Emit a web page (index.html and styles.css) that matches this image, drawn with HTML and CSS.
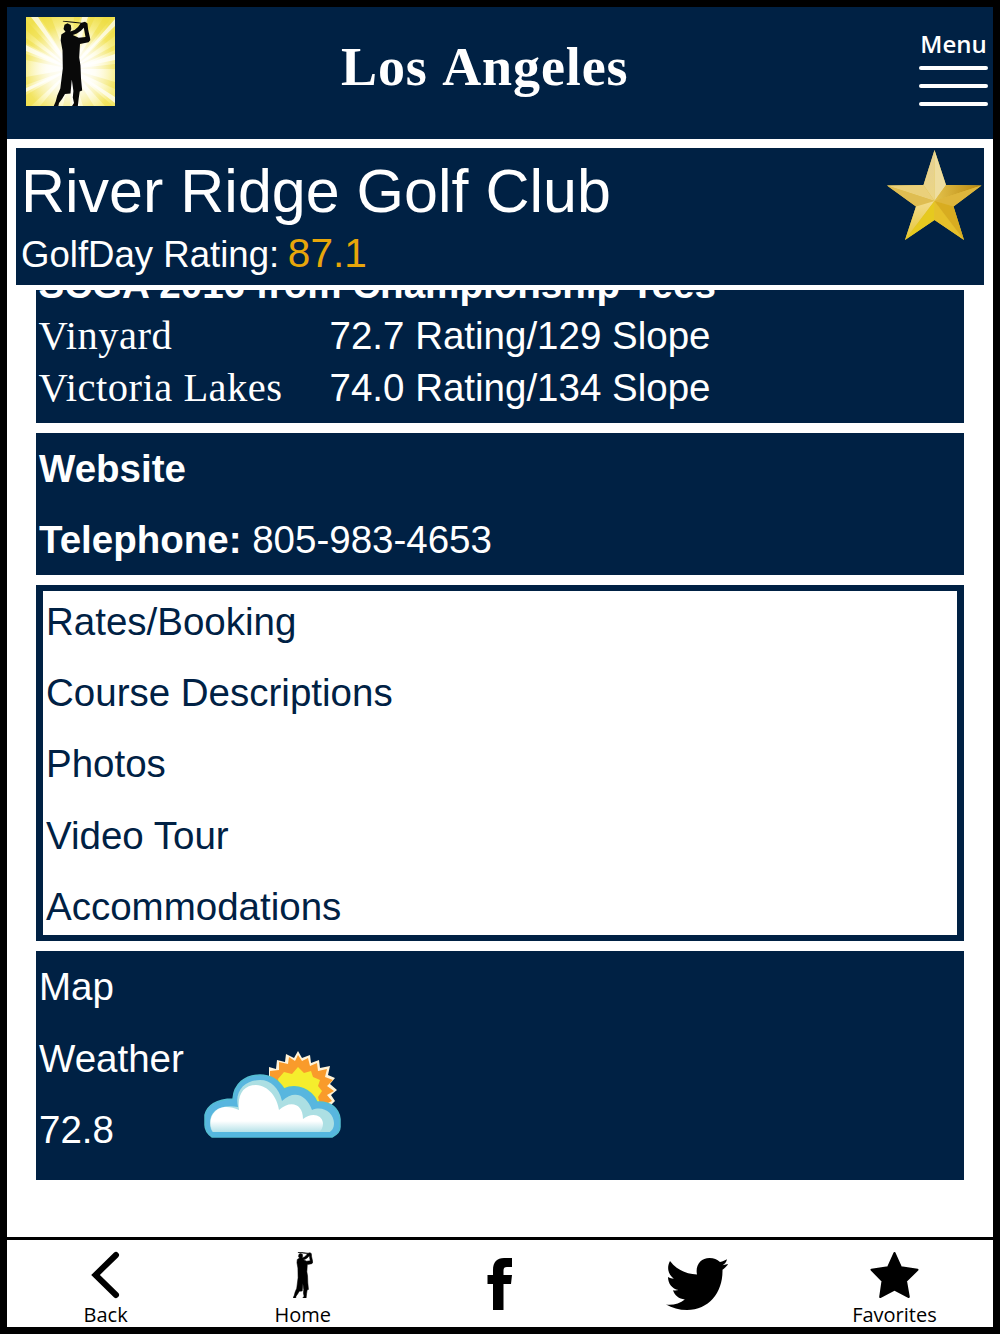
FILE: index.html
```html
<!DOCTYPE html>
<html lang="en">

<head>
  <meta charset="UTF-8">
  <title>River Ridge Golf Club</title>
  <link rel="stylesheet" href="styles.css">
</head>

<body>
  <div class="app">
    <header class="header">
      <svg class="logo" viewBox="0 0 89 89">
        <defs>
          <radialGradient id="glow" cx="50%" cy="60%" r="68%">
            <stop offset="0" stop-color="#fff"/>
            <stop offset=".4" stop-color="#fffde0"/>
            <stop offset=".75" stop-color="#f8ee8a"/>
            <stop offset="1" stop-color="#efe04e"/>
          </radialGradient>
          <radialGradient id="shine" cx="50%" cy="60%" r="52%">
            <stop offset="0" stop-color="#fff"/>
            <stop offset=".45" stop-color="#fff" stop-opacity=".8"/>
            <stop offset="1" stop-color="#fff" stop-opacity="0"/>
          </radialGradient>
          <symbol id="golfer" viewBox="0 0 37 86">
            <path d="M9.5 .2 20 1.2 28 2.2 31.5 1.2 34 3 34.6 9 37 19.5 35 21.8 26.5 23.6 25.7 37 27 45 27.5 58 28.7 70 26.2 71 25.2 78 24.3 86H18.2L20.5 82.5 19.3 77 19.9 70.5 18.3 59 17 73 11.5 73.5 8.5 78.5 5.5 82.5 4.8 86H0L2.2 81 3.8 75 6.8 68 9.3 48 9 30 7.2 20 7.8 14 12 11.2 10 8.4 11 4.2 14 2.8 17.3 4.4 17.8 8.5 16.8 11 21 9.5 24.5 6.4 27 2.9 17 2 9.3 1Z M30.3 7.2 27.4 10.2 23.4 13 19.3 14.6 25.3 17.2 32 16.4Z" fill-rule="evenodd"/>
          </symbol>
        </defs>
        <rect width="89" height="89" fill="url(#glow)"/>
        <g fill="#eedc3d" opacity=".5">
          <path d="M45 52 0 3V13ZM45 52 0 21V26ZM45 52 14 0H25ZM45 52 48 0H54ZM45 52 64 0H69ZM45 52 78 0H86ZM45 52 89 12V19ZM45 52 89 28V33ZM45 52 89 47V52ZM45 52 89 65V72ZM45 52 79 89H87ZM45 52 57 89H68ZM45 52 37 89H44ZM45 52 14 89H28ZM45 52 0 78V89H5ZM45 52 0 60V68ZM45 52 0 37V43Z"/>
        </g>
        <g fill="#fff" opacity=".7">
          <path d="M45 52 0 28V34ZM45 52 5 0H12ZM45 52 56 0H62ZM45 52 89 2V9ZM45 52 89 37V43ZM45 52 89 80V86ZM45 52 46 89H54ZM45 52 0 71V75Z"/>
        </g>
        <rect width="89" height="89" fill="url(#shine)"/>
        <use href="#golfer" x="27.5" y="3.5" width="37" height="86" fill="#090909"/>
      </svg>
      <div class="city">Los Angeles</div>
      <div class="menu">
        <span class="menu-label">Menu</span>
        <span class="menu-bar"></span>
        <span class="menu-bar"></span>
        <span class="menu-bar"></span>
      </div>
    </header>

    <div class="course">
      <div>
        <div class="course-name">River Ridge Golf Club</div>
        <div class="course-rating">GolfDay Rating: <span class="score">87.1</span></div>
      </div>
      <svg class="gold-star" viewBox="0 0 95 92">
        <defs>
          <linearGradient id="goldLight" x1="0" y1="0" x2="0" y2="1">
            <stop offset="0" stop-color="#f3dc8e"/>
            <stop offset="1" stop-color="#e5c634"/>
          </linearGradient>
          <linearGradient id="goldDark" x1="0" y1="0" x2="1" y2="0">
            <stop offset="0" stop-color="#e3c24c"/>
            <stop offset="1" stop-color="#b9860c"/>
          </linearGradient>
          <linearGradient id="goldTop" x1="0" y1="0" x2="0" y2="1">
            <stop offset="0" stop-color="#e3cf95"/>
            <stop offset="1" stop-color="#ecd684"/>
          </linearGradient>
        </defs>
        <path d="M47.5 0 59 35 94.5 35.5 66.5 56.5 77 90 47.5 70 18 90 29 56.5 0 35.5 36.5 35Z" fill="#dfbe3d"/>
        <path d="M47.5 0V51L36.5 35Z" fill="url(#goldTop)"/>
        <path d="M47.5 0V51L59 35Z" fill="#eedd9f"/>
        <path d="M0 35.5 36.5 35 47.5 51Z" fill="#ead07a"/>
        <path d="M0 35.5 29 56.5 47.5 51Z" fill="#dfbd52"/>
        <path d="M94.5 35.5 59 35 47.5 51Z" fill="url(#goldDark)"/>
        <path d="M94.5 35.5 66.5 56.5 47.5 51Z" fill="#deb63c"/>
        <path d="M18 90 29 56.5 47.5 51Z" fill="url(#goldLight)"/>
        <path d="M18 90 47.5 70V51Z" fill="#e6c91f"/>
        <path d="M77 90 47.5 70V51Z" fill="#e6c02a"/>
        <path d="M77 90 66.5 56.5 47.5 51Z" fill="#d8ac20"/>
      </svg>
    </div>

    <main class="content">
      <section class="panel ratings">
        <div class="row heading"><b>SCGA 2016 from Championship Tees</b></div>
        <div class="row"><span class="nine">Vinyard</span><span>72.7 Rating/129 Slope</span></div>
        <div class="row"><span class="nine">Victoria Lakes</span><span>74.0 Rating/134 Slope</span></div>
      </section>

      <section class="panel">
        <div class="line"><b>Website</b></div>
        <div class="line"><b>Telephone:</b> 805-983-4653</div>
      </section>

      <section class="panel links">
        <div class="line">Rates/Booking</div>
        <div class="line">Course Descriptions</div>
        <div class="line">Photos</div>
        <div class="line">Video Tour</div>
        <div class="line">Accommodations</div>
      </section>

      <section class="panel local">
        <div>
          <div class="line">Map</div>
          <div class="line">Weather</div>
          <div class="line">72.8</div>
        </div>
        <svg class="weather" viewBox="0 0 137 88">
          <defs>
            <linearGradient id="cloudBase" x1="0" y1="0" x2="0" y2="1">
              <stop offset=".75" stop-color="#fff"/>
              <stop offset="1" stop-color="#b0dfe6"/>
            </linearGradient>
          </defs>
          <path d="M65 16 72 18 73 9 81 11 82 3 90 7 94 0 98 7 106 4 107 12 115 9 116 17 126 15 124 24 131 27 126 33 133 39 127 44 131 50 127 54 129 62H75L65 27Z" fill="#fff3d8"/>
          <path d="M66 20 75 19 75 11 84 13 85 6 91 10 94 4 98 10 104 7 106 15 113 12 114 20 123 18 121 26 129 29 123 35 130 40 123 44 128 50 124 52 127 61H75L66 29Z" fill="#f99b2b"/>
          <path d="M74 28 80 21 88 23 94 16 100 22 107 20 109 26 116 29 114 35 118 40 114 46 116 53 108 62H80Z" fill="#f5ed2d"/>
          <path d="M8 86C4 83 1 79 1 74V64C3 55 12 48 29 48 30 33 41 24 56 24 67 24 75 30 80 38 93 32 108 39 113 51 127 50 135 58 136 68V76C136 80 132 84 128 86Z" fill="#58b6df" stroke="#54bed1" stroke-width="1.5"/>
          <path d="M10 82C7 80 6 76 6 72 6 60 16 53 34 56 30 39 42 29 56 29 67 29 75 37 78 50 91 38 103 45 108 59 119 54 130 62 130 72 130 77 128 80 124 82Z" fill="#acdfe3"/>
          <path d="M10 82C6 78 5 69 9 63 14 55 24 54 35 59 33 43 40 34 52 34 65 35 73 46 75 59 86 49 99 52 99 68 108 61 118 64 119 72 119 77 117 80 114 82Z" fill="url(#cloudBase)"/>
          <path d="M7 81H130L126 86H10Z" fill="#54b7df"/>
        </svg>
      </section>
    </main>

    <footer class="tabbar">
      <div class="tab">
        <svg class="tab-icon" viewBox="0 0 60 50">
          <path d="M40 5 19.5 25 40 45" fill="none" stroke="#000" stroke-width="6" stroke-linecap="round"/>
        </svg>
        <span>Back</span>
      </div>
      <div class="tab">
        <svg class="tab-icon" viewBox="0 0 60 50">
          <use href="#golfer" x="20" y="2" width="20" height="46" stroke="#000" stroke-width="1"/>
        </svg>
        <span>Home</span>
      </div>
      <div class="tab">
        <svg class="tab-icon social" viewBox="0 0 62 52">
          <path d="M24 52V26H18.5V17H24V12C24 4 28 0 35 0H43V9H38C35.5 9 34.5 10 34.5 12.5V17H43L42 26H34.5V52Z"/>
        </svg>
      </div>
      <div class="tab">
        <svg class="tab-icon social" viewBox="0 0 62 52">
          <path d="M4 3C11 12 20 16 31 16.5 29 7 35 0 43.5 0 48 0 51 1.5 54 4 57 3.5 59 2.5 61 1.3 60.5 4 58.5 6.3 56.5 7.2L62.5 5.8C60.5 8.5 58.5 10 56.5 11.8 57 34 43 52 21 52 13 52 6 50 0 46.5 7 47.3 14 45.5 18.8 41.4 13 41 8.5 37.5 7 32.3 9 32.6 11 32.5 12.5 32.1 6 30.7 2 25.5 2 19 4 20 5.8 20.7 7.8 20.7 2 16.5 .5 9.2 4 3Z"/>
        </svg>
      </div>
      <div class="tab">
        <svg class="tab-icon" viewBox="0 0 60 50">
          <path d="M30.5 3 37 17.3 53.5 19.8 42 31 44.8 47 30.5 39.5 16.2 47 18.5 31 7.5 19.8 24 17.3Z" stroke="#000" stroke-width="2" stroke-linejoin="round"/>
        </svg>
        <span>Favorites</span>
      </div>
    </footer>
  </div>
</body>

</html>
```
FILE: styles.css
```css
* {
  box-sizing: border-box;
}

body {
  margin: 0;
  font-family: "Liberation Sans", Arial, sans-serif;
  font-size: 38.5px;
  color: #fff;
}

svg {
  display: block;
  flex: none;
}

.app {
  display: flex;
  flex-direction: column;
  width: 1000px;
  height: 1334px;
  border: 7px solid #000;
  background: #fff;
  overflow: hidden;
}

.header {
  display: flex;
  justify-content: space-between;
  height: 132px;
  padding: 10px 5px 0 19px;
  background: #002144;
}

.logo {
  width: 89px;
  height: 89px;
}

.city {
  margin-right: auto;
  margin-left: 226px;
  padding-top: 17px;
  font: bold 54px/66px "Liberation Serif", "Times New Roman", serif;
  letter-spacing: .9px;
  word-spacing: 3px;
}

.menu {
  display: flex;
  flex-direction: column;
  align-items: center;
  width: 69px;
  padding-top: 11px;
  font: 600 24px/32px "Open Sans", "Noto Sans", sans-serif;
}

.menu-label {
  height: 38px;
}

.menu-bar {
  width: 69px;
  height: 4px;
  margin-bottom: 14px;
  border-radius: 2px;
  background: #fff;
}

.course {
  display: flex;
  justify-content: space-between;
  height: 137px;
  margin: 9px 9px 5px;
  padding: 2px 2px 0 5px;
  background: #002144;
}

.course-name {
  font-size: 61px;
  line-height: 82px;
}

.course-rating {
  font-size: 36.6px;
  line-height: 43px;
}

.score {
  margin-left: -1.5px;
  font-size: 40.5px;
  color: #e8a60a;
}

.gold-star {
  width: 95px;
  height: 92px;
}

.content {
  display: flex;
  flex-direction: column;
  flex: 1;
  gap: 10px;
  padding: 0 29px;
  overflow: hidden;
}

.panel {
  flex: none;
  padding: 0 3px;
  background: #002144;
}

/* scrolled up, the heading sits partly under the course title */
.ratings {
  display: flex;
  flex-direction: column;
  justify-content: flex-end;
  height: 133px;
  padding: 0 2.5px 10px;
  overflow: hidden;
}

.row {
  display: flex;
  flex: none;
  line-height: 51.4px;
}

.heading {
  font-size: 38.6px;
}

.nine {
  width: 291px;
  font-family: Georgia, "Liberation Serif", serif;
  font-size: 40.5px;
  letter-spacing: .5px;
}

.line {
  line-height: 71.2px;
}

.links {
  height: 356px;
  border: 7px solid #002144;
  border-top-width: 6px;
  border-bottom-width: 6px;
  background: #fff;
  color: #002144;
}

.links .line:first-child {
  margin-top: -5.5px;
}

.local {
  display: flex;
  gap: 20px;
  height: 229px;
}

.weather {
  width: 137px;
  height: 88px;
  margin-top: 100px;
}

.tabbar {
  display: flex;
  flex: none;
  height: 90px;
  border-top: 3px solid #000;
  color: #000;
  font: 500 20px/26px "Open Sans", "Noto Sans", sans-serif;
}

.tab {
  display: flex;
  flex: 1;
  flex-direction: column;
  align-items: center;
  padding-top: 10px;
}

.tab-icon {
  width: 60px;
  height: 50px;
  margin-bottom: 2px;
}

.social {
  width: 62px;
  height: 52px;
  margin-top: 8px;
}
```
